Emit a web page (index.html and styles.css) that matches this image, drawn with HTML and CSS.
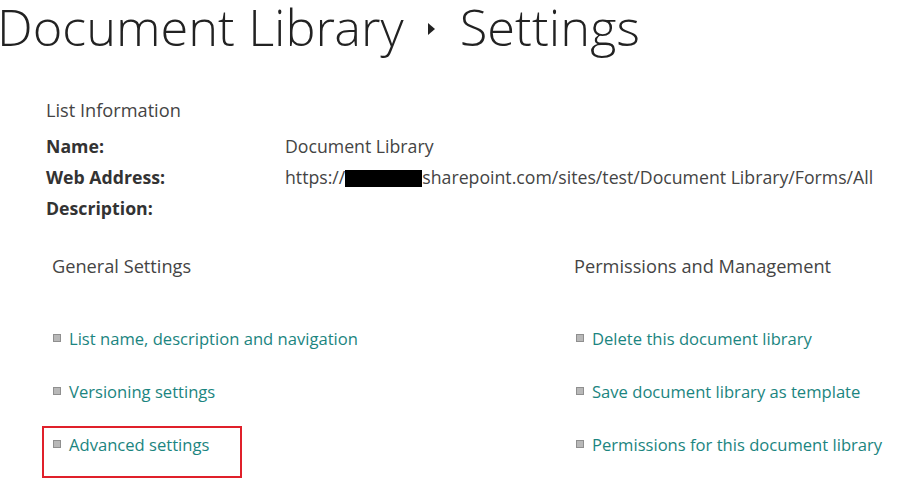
FILE: index.html
```html
<!DOCTYPE html>
<html>
<head>
<meta charset="utf-8">
<link rel="stylesheet" href="styles.css">
</head>
<body>
<div class="page">
  <h1 class="title"><span>Document Library</span><span class="sep"><svg width="7" height="12" viewBox="0 0 7 12"><path d="M0 0 L7 6 L0 12 Z" fill="#222"/></svg></span><span>Settings</span></h1>
  <div class="info">
    <div class="info-head">List Information</div>
    <div class="info-grid">
      <div class="lbl">Name:</div><div class="val">Document Library</div>
      <div class="lbl">Web Address:</div><div class="val">https://<span class="redact"></span>sharepoint.com/sites/test/Document Library/Forms/All</div>
      <div class="lbl">Description:</div><div class="val"></div>
    </div>
  </div>
  <div class="cols">
    <div class="col col-left">
      <div class="col-head">General Settings</div>
      <ul class="links">
        <li><span class="bullet"></span><a>List name, description and navigation</a></li>
        <li><span class="bullet"></span><a>Versioning settings</a></li>
        <li class="hl"><span class="bullet"></span><a>Advanced settings</a></li>
      </ul>
    </div>
    <div class="col col-right">
      <div class="col-head">Permissions and Management</div>
      <ul class="links">
        <li><span class="bullet"></span><a>Delete this document library</a></li>
        <li><span class="bullet"></span><a>Save document library as template</a></li>
        <li><span class="bullet"></span><a>Permissions for this document library</a></li>
      </ul>
    </div>
  </div>
</div>
</body>
</html>
```
FILE: styles.css
```css
* { box-sizing: border-box; }
html, body { margin: 0; padding: 0; background: #fff; }
body { font-family: "Open Sans", "Noto Sans", sans-serif; color: #444; overflow: hidden; }
.page { width: 911px; height: 493px; position: relative; }
.title {
  margin: 0;
  font-family: "Open Sans Light", "Open Sans", sans-serif;
  font-weight: 300;
  font-size: 50.5px;
  line-height: 54px;
  color: #222;
  margin-left: -3px;
  display: flex;
  align-items: center;
  white-space: nowrap;
}
.title .sep { display: inline-flex; margin: 4px 25px 0 24px; }
.info { padding-left: 46px; margin-top: 44px; }
.info-head { font-size: 18.2px; line-height: 24px; color: #444; }
.info-grid {
  display: grid;
  grid-template-columns: 239px auto;
  grid-auto-rows: 31px;
  margin-top: 9px;
  font-size: 17.7px;
  line-height: 31px;
}
.lbl { font-weight: 700; color: #333; }
.val { color: #444; white-space: nowrap; }
.redact { display: inline-block; width: 77px; height: 17px; background: #000; vertical-align: -3px; }
.cols { display: flex; margin-top: 30px; }
.col { flex: none; }
.col-left { width: 574px; padding-left: 52px; }
.col-right { padding-left: 0; }
.col-head { font-size: 18.2px; line-height: 24px; color: #444; }
.links { list-style: none; margin: 34px 0 0 0; padding: 0; }
.links li { display: flex; align-items: center; height: 53px; position: relative; }
.col-left .links li { margin-left: 1px; }
.col-right .links li { margin-left: 2px; }
.bullet {
  width: 8px; height: 8px;
  background: #b8b8b8;
  border: 1px solid #8f8f8f;
  margin-right: 8px;
  margin-top: -2px;
  flex: none;
}
.links a { font-size: 16.6px; color: #1b8580; text-decoration: none; white-space: nowrap; }
.hl::before {
  content: "";
  position: absolute;
  left: -11px;
  top: 8px;
  width: 196px;
  height: 48px;
  border: 2px solid #e0202a;
}
```
